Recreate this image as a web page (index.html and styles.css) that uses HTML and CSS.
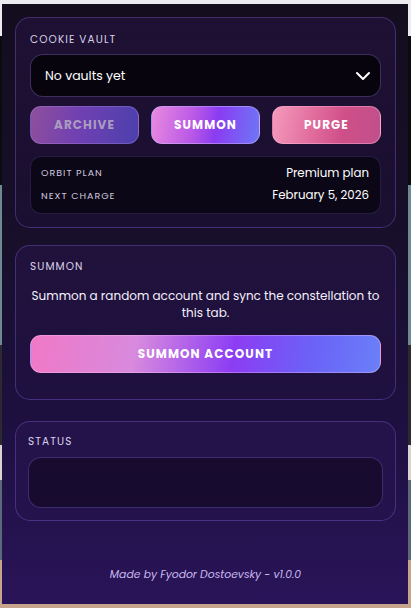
FILE: index.html
```html
<!DOCTYPE html>
<html lang="en">
<head>
<meta charset="utf-8">
<title>Cookie Vault</title>
<link rel="stylesheet" href="styles.css">
</head>
<body>
<main class="popup">
  <section class="card vault">
    <div class="label">COOKIE VAULT</div>
    <div class="select">
      <span>No vaults yet</span>
      <svg class="chev" width="16" height="10" viewBox="0 0 16 10"><path d="M2 2 L8 8 L14 2" fill="none" stroke="#fff" stroke-width="2" stroke-linecap="round" stroke-linejoin="round"/></svg>
    </div>
    <div class="actions">
      <button class="btn archive">ARCHIVE</button>
      <button class="btn summon">SUMMON</button>
      <button class="btn purge">PURGE</button>
    </div>
    <div class="plan">
      <div class="row"><span class="key">ORBIT PLAN</span><span class="val">Premium plan</span></div>
      <div class="row"><span class="key">NEXT CHARGE</span><span class="val">February 5, 2026</span></div>
    </div>
  </section>

  <section class="card summon-card">
    <div class="label">SUMMON</div>
    <p class="desc">Summon a random account and sync the constellation to this tab.</p>
    <button class="btn wide">SUMMON ACCOUNT</button>
  </section>

  <section class="card status-card">
    <div class="label">STATUS</div>
    <div class="status-box"></div>
  </section>

  <footer class="foot">Made by Fyodor Dostoevsky - v1.0.0</footer>
</main>
</body>
</html>
```

FILE: styles.css
```css
* { box-sizing: border-box; }

html, body { margin: 0; height: 100%; }

body {
  width: 411px;
  height: 608px;
  padding: 4px 3px 4px 2px;
  background:
    linear-gradient(to bottom, #ececf0 0 36px, #0c0b0e 36px 185px, #6d8a93 185px 345px, #2c2a2e 345px 445px, #d9d4cf 445px 480px, #5a6a78 480px 560px, #c7a58c 560px);
  font-family: "Poppins", "Inter", "Noto Sans", sans-serif;
  color: #fff;
}

.popup {
  height: 100%;
  display: flex;
  flex-direction: column;
  padding: 13px 12px 0 13px;
  background: linear-gradient(to bottom, #140d1e 0%, #180f2b 40%, #1d1040 70%, #2a1459 100%);
}

.card {
  border: 1px solid rgba(120, 90, 200, 0.42);
  border-radius: 15px;
  background: linear-gradient(to bottom, rgba(55, 25, 100, 0.3), rgba(40, 20, 80, 0.18));
}

.label {
  font-size: 10.5px;
  letter-spacing: 1.1px;
  color: #d9d2ea;
  line-height: 14px;
}

/* first card: vault picker */
.vault {
  padding: 15px 14px 13px 14px;
}

.select {
  margin-top: 7px;
  height: 43px;
  display: flex;
  align-items: center;
  justify-content: space-between;
  padding: 0 9px 0 14px;
  border: 1px solid rgba(125, 100, 190, 0.45);
  border-radius: 13px;
  background: #07040e;
  font-size: 12.5px;
  color: #fff;
}

.chev { display: block; }

.actions {
  margin-top: 9px;
  display: grid;
  grid-template-columns: 1fr 1fr 1fr;
  gap: 12px;
}

.btn {
  font-family: inherit;
  height: 38px;
  border-radius: 11px;
  border: 1px solid rgba(255, 255, 255, 0.22);
  font-size: 12px;
  font-weight: 700;
  letter-spacing: 1.1px;
  color: #fff;
  padding: 0;
}

.archive {
  background: linear-gradient(100deg, #8e4f9c 0%, #7040b2 45%, #4b40ac 100%);
  color: #a99cc0;
  border-color: rgba(180, 150, 230, 0.3);
}

.summon {
  background: linear-gradient(100deg, #e98ae0 0%, #b857e6 40%, #8a3cf2 60%, #6d78f6 100%);
  border-color: rgba(200, 180, 255, 0.5);
}

.purge {
  background: linear-gradient(100deg, #f59abb 0%, #e06a9c 40%, #cf4f88 65%, #c0508c 100%);
  border-color: rgba(255, 190, 220, 0.4);
}

.plan {
  margin-top: 12px;
  padding: 5px 11px 6px 10px;
  border: 1px solid rgba(90, 70, 140, 0.35);
  border-radius: 11px;
  background: #0b0716;
}

.row {
  display: flex;
  justify-content: space-between;
  align-items: center;
  height: 22.5px;
}

.key {
  font-size: 9.5px;
  letter-spacing: 1px;
  color: #cfc7de;
}

.val {
  font-size: 11.8px;
  color: #fff;
}

/* second card: summon */
.summon-card {
  margin-top: 17px;
  padding: 14px 14px 26px 14px;
}

.desc {
  margin: 13px 0 0;
  text-align: center;
  font-size: 12px;
  line-height: 17px;
  color: #f4f0fa;
}

.wide {
  display: block;
  width: 100%;
  margin-top: 14px;
  border-color: rgba(255, 200, 240, 0.35);
  background: linear-gradient(100deg, #f078c6 0%, #d88ade 30%, #8c3df4 58%, #6b62f7 80%, #6a80f8 100%);
}

/* third card: status */
.status-card {
  margin-top: 21px;
  padding: 13px 12px 12px 12px;
}

.status-box {
  margin-top: 8px;
  height: 51px;
  border: 1px solid rgba(110, 85, 180, 0.45);
  border-radius: 13px;
  background: rgba(12, 6, 24, 0.55);
}

.foot {
  margin-top: auto;
  padding-bottom: 21px;
  text-align: center;
  font-size: 10.8px;
  font-style: italic;
  color: #c9b9ef;
}
```
